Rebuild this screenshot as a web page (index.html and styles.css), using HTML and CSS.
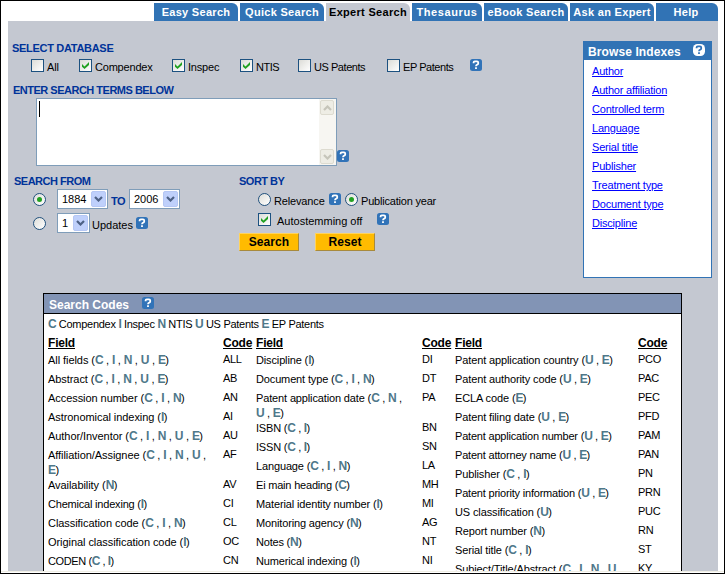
FILE: index.html
```html
<!DOCTYPE html>
<html lang="en">
<head>
<meta charset="utf-8">
<title>Expert Search</title>
<link rel="stylesheet" href="styles.css">
</head>
<body>
<svg class="defs" width="0" height="0">
  <symbol id="help" viewBox="0 0 12 12"><rect width="12" height="12" rx="2.5" fill="#3173b8"/><path d="M3.6 4.2V3.4Q3.6 2.4 4.8 2.4H7Q8.2 2.4 8.2 3.5V4.4Q8.2 5.2 7.2 5.6Q6 6 6 7.2M6 8.3V10" fill="none" stroke="#fff" stroke-width="1.8"/></symbol>
  <symbol id="help-light" viewBox="0 0 12 12"><rect width="12" height="12" rx="4.5" fill="#fff"/><path d="M3.6 4.2V3.4Q3.6 2.4 4.8 2.4H7Q8.2 2.4 8.2 3.5V4.4Q8.2 5.2 7.2 5.6Q6 6 6 7.2M6 8.3V10" fill="none" stroke="#3173b8" stroke-width="1.8"/></symbol>
  <symbol id="tick" viewBox="0 0 7 7"><path d="M0 2L2.5 4.5L7 0V3L2.5 7L0 4.7Z" fill="#21a121"/></symbol>
  <symbol id="chev" viewBox="0 0 9 6"><path d="M1 1L4.5 4.5L8 1" fill="none" stroke="currentColor" stroke-width="2.2"/></symbol>
  <symbol id="chev-up" viewBox="0 0 9 6"><path d="M1 5L4.5 1.5L8 5" fill="none" stroke="currentColor" stroke-width="2.2"/></symbol>
</svg>
<div class="window">
  <nav class="tabs">
    <a class="tab">Easy Search</a><a class="tab">Quick Search</a><a class="tab active">Expert Search</a><a class="tab thes">Thesaurus</a><a class="tab">eBook Search</a><a class="tab ask">Ask an Expert</a><a class="tab last">Help</a>
  </nav>
  <main class="page">
    <div class="top">
      <form class="form">
        <h2 class="label db">SELECT DATABASE</h2>
        <div class="databases">
          <label class="opt"><i class="box"></i>All</label>
          <label class="opt"><i class="box"><svg><use href="#tick"/></svg></i>Compendex</label>
          <label class="opt"><i class="box"><svg><use href="#tick"/></svg></i>Inspec</label>
          <label class="opt caps"><i class="box"><svg><use href="#tick"/></svg></i>NTIS</label>
          <label class="opt caps"><i class="box"></i>US Patents</label>
          <label class="opt caps"><i class="box"></i>EP Patents</label>
          <svg class="help"><use href="#help"/></svg>
        </div>
        <h2 class="label terms">ENTER SEARCH TERMS BELOW</h2>
        <div class="query">
          <div class="textarea"><i class="caret"></i>
            <div class="scroll"><b><svg><use href="#chev-up"/></svg></b><b><svg><use href="#chev"/></svg></b></div>
          </div>
          <svg class="help"><use href="#help"/></svg>
        </div>
        <div class="options">
          <section class="from">
            <h2 class="label">SEARCH FROM</h2>
            <div class="line">
              <i class="radio on"></i><span class="select year">1884<b><svg><use href="#chev"/></svg></b></span><span class="to">TO</span><span class="select year">2006<b><svg><use href="#chev"/></svg></b></span>
            </div>
            <div class="line">
              <i class="radio"></i><span class="select upd">1<b><svg><use href="#chev"/></svg></b></span><span class="updates">Updates</span><svg class="help"><use href="#help"/></svg>
            </div>
          </section>
          <section class="sort">
            <h2 class="label">SORT BY</h2>
            <div class="sortline">
              <i class="radio"></i><span class="rel">Relevance</span><svg class="help"><use href="#help"/></svg><i class="radio on pub"></i><span class="year-text">Publication year</span>
            </div>
            <div class="sortline stem">
              <i class="box"><svg><use href="#tick"/></svg></i><span class="auto">Autostemming off</span><svg class="help"><use href="#help"/></svg>
            </div>
            <div class="buttons"><span class="btn">Search</span><span class="btn">Reset</span></div>
          </section>
        </div>
      </form>
      <aside class="browse">
        <h2>Browse Indexes<svg class="help"><use href="#help-light"/></svg></h2>
        <ul>
          <li>Author</li>
          <li>Author affiliation</li>
          <li>Controlled term</li>
          <li>Language</li>
          <li>Serial title</li>
          <li>Publisher</li>
          <li>Treatment type</li>
          <li>Document type</li>
          <li>Discipline</li>
        </ul>
      </aside>
    </div>
    <section class="codes">
      <h2 class="codes-title">Search Codes<svg class="help"><use href="#help"/></svg></h2>
      <p class="legend"><b>C</b> Compendex <b>I</b> Inspec <b>N</b> NTIS <b>U</b> US Patents <b>E</b> EP Patents</p>
      <div class="groups">
        <div class="group g1">
          <div class="head"><u>Field</u><u>Code</u></div>
          <div class="row"><span>All fields (<b>C</b> , <b>I</b> , <b>N</b> , <b>U</b> , <b>E</b>)</span><em>ALL</em></div>
          <div class="row"><span>Abstract (<b>C</b> , <b>I</b> , <b>N</b> , <b>U</b> , <b>E</b>)</span><em>AB</em></div>
          <div class="row"><span>Accession number (<b>C</b> , <b>I</b> , <b>N</b>)</span><em>AN</em></div>
          <div class="row"><span>Astronomical indexing (<b>I</b>)</span><em>AI</em></div>
          <div class="row"><span>Author/Inventor (<b>C</b> , <b>I</b> , <b>N</b> , <b>U</b> , <b>E</b>)</span><em>AU</em></div>
          <div class="row"><span>Affiliation/Assignee (<b>C</b> , <b>I</b> , <b>N</b> , <b>U</b> ,<br><b>E</b>)</span><em>AF</em></div>
          <div class="row"><span>Availability (<b>N</b>)</span><em>AV</em></div>
          <div class="row tight"><span>Chemical indexing (<b>I</b>)</span><em>CI</em></div>
          <div class="row"><span>Classification code (<b>C</b> , <b>I</b> , <b>N</b>)</span><em>CL</em></div>
          <div class="row"><span>Original classification code (<b>I</b>)</span><em>OC</em></div>
          <div class="row caps"><span>CODEN (<b>C</b> , <b>I</b>)</span><em>CN</em></div>
        </div>
        <div class="group g2">
          <div class="head"><u>Field</u><u>Code</u></div>
          <div class="row"><span>Discipline (<b>I</b>)</span><em>DI</em></div>
          <div class="row"><span>Document type (<b>C</b> , <b>I</b> , <b>N</b>)</span><em>DT</em></div>
          <div class="row"><span>Patent application date (<b>C</b> , <b>N</b> ,<br><b>U</b> , <b>E</b>)</span><em>PA</em></div>
          <div class="row tight"><span>ISBN (<b>C</b> , <b>I</b>)</span><em>BN</em></div>
          <div class="row tight"><span>ISSN (<b>C</b> , <b>I</b>)</span><em>SN</em></div>
          <div class="row"><span>Language (<b>C</b> , <b>I</b> , <b>N</b>)</span><em>LA</em></div>
          <div class="row tight"><span>Ei main heading (<b>C</b>)</span><em>MH</em></div>
          <div class="row"><span>Material identity number (<b>I</b>)</span><em>MI</em></div>
          <div class="row"><span>Monitoring agency (<b>N</b>)</span><em>AG</em></div>
          <div class="row tight"><span>Notes (<b>N</b>)</span><em>NT</em></div>
          <div class="row"><span>Numerical indexing (<b>I</b>)</span><em>NI</em></div>
        </div>
        <div class="group g3">
          <div class="head"><u>Field</u><u>Code</u></div>
          <div class="row"><span>Patent application country (<b>U</b> , <b>E</b>)</span><em>PCO</em></div>
          <div class="row"><span>Patent authority code (<b>U</b> , <b>E</b>)</span><em>PAC</em></div>
          <div class="row"><span>ECLA code (<b>E</b>)</span><em>PEC</em></div>
          <div class="row"><span>Patent filing date (<b>U</b> , <b>E</b>)</span><em>PFD</em></div>
          <div class="row tight"><span>Patent application number (<b>U</b> , <b>E</b>)</span><em>PAM</em></div>
          <div class="row tight"><span>Patent attorney name (<b>U</b> , <b>E</b>)</span><em>PAN</em></div>
          <div class="row"><span>Publisher (<b>C</b> , <b>I</b>)</span><em>PN</em></div>
          <div class="row tight"><span>Patent priority information (<b>U</b> , <b>E</b>)</span><em>PRN</em></div>
          <div class="row"><span>US classification (<b>U</b>)</span><em>PUC</em></div>
          <div class="row"><span>Report number (<b>N</b>)</span><em>RN</em></div>
          <div class="row"><span>Serial title (<b>C</b> , <b>I</b>)</span><em>ST</em></div>
          <div class="row"><span>Subject/Title/Abstract (<b>C</b> , <b>I</b> , <b>N</b> , <b>U</b></span><em>KY</em></div>
        </div>
      </div>
    </section>
  </main>
</div>
</body>
</html>
```
FILE: styles.css
```css
* { box-sizing: border-box; }
body { margin: 0; background: #fff; font: 11px/15px "Liberation Sans", Arial, sans-serif; color: #000; }
.defs { display: block; position: absolute; }
.window { width: 725px; height: 574px; border: 1px solid #000; padding: 2px 6px 0 7px; overflow: hidden; display: flex; flex-direction: column; }
.window::after { content: ""; height: 1px; background: #f0eee4; margin: 0 -6px 0 -7px; flex: none; }
h2, p, ul { margin: 0; padding: 0; }
i, em { font-style: normal; }
.help { display: block; width: 12px; height: 12px; flex: none; }

.tabs { display: flex; gap: 2px; margin-left: 146px; height: 18px; flex: none; }
.tab { width: 84px; height: 18px; flex: none; background: #3173b5; color: #fff; font-weight: bold; line-height: 18px; text-align: center; border-top-right-radius: 6px; letter-spacing: .3px; white-space: nowrap; }
.tab.active { background: #c4c8d1; color: #000; }
.tab.thes { width: 70px; letter-spacing: .6px; }
.tab.last { width: 62px; padding-right: 2px; }

.page { background: #c4c8d1; width: 710px; height: 550px; overflow: hidden; flex: none; }
.top { display: flex; height: 272px; }
.form { width: 575px; flex: none; }
.label { font-size: 11px; line-height: 15px; font-weight: bold; color: #003399; white-space: nowrap; letter-spacing: -.5px; }
.db { margin: 20px 0 0 4px; letter-spacing: -.3px; }
.databases { display: grid; grid-template-columns: 48px 93px 68px 58px 89px 83px 12px; margin: 3px 0 0 23px; height: 13px; }
.opt { display: flex; gap: 3px; line-height: 16px; height: 13px; white-space: nowrap; letter-spacing: -.2px; }
.opt.caps { letter-spacing: -.45px; }
.box { width: 13px; height: 13px; flex: none; border: 1px solid #1c5180; background: linear-gradient(135deg, #dcdcd7, #fff); display: block; padding: 2px; }
.box svg { display: block; width: 7px; height: 7px; }
.terms { margin: 11px 0 0 5px; }
.query { display: flex; margin: 0 0 0 28px; align-items: flex-end; height: 68px; }
.query .help { margin-bottom: 4px; }
.textarea { width: 301px; height: 68px; border: 1px solid #7f9db9; background: #fff; display: flex; justify-content: space-between; }
.caret { width: 1px; height: 16px; background: #000; margin: 2px 0 0 2px; }
.scroll { width: 17px; background: #f7f6f2; display: flex; flex-direction: column; justify-content: space-between; padding: 1px; color: #c6c5ba; }
.scroll b { height: 15px; width: 14px; border: 1px solid #dddbd0; border-radius: 2px; background: #eeede5; display: flex; align-items: center; justify-content: center; }
.scroll svg { width: 9px; height: 6px; }

.options { display: flex; margin-top: 8px; }
.from { width: 225px; padding-left: 6px; flex: none; }
.sort { padding-left: 6px; }
.line { display: flex; height: 20px; margin-bottom: 4px; padding-left: 19px; }
.line .radio { margin: 4px 11px 0 0; }
.radio { width: 13px; height: 13px; flex: none; border: 1px solid #21517d; border-radius: 50%; background: linear-gradient(135deg, #deded9, #fff); display: flex; align-items: center; justify-content: center; }
.radio.on::after { content: ""; width: 5px; height: 5px; border-radius: 50%; background: #21a121; }
.select { display: flex; justify-content: space-between; height: 20px; border: 1px solid #7f9db9; background: #fff; padding: 1px 1px 1px 4px; font-size: 11px; line-height: 17px; }
.year { width: 51px; }
.upd { width: 33px; }
.select b { width: 15px; height: 16px; background: #bfd0fb; border: 1px solid #b5c7f4; border-radius: 2px; color: #4d6185; display: flex; align-items: center; justify-content: center; }
.select svg { width: 9px; height: 6px; }
.to { color: #039; font-weight: bold; width: 21px; padding-left: 3px; line-height: 24px; letter-spacing: -.4px; }
.updates { width: 46px; padding-left: 2px; line-height: 24px; }
.line .help { margin-top: 4px; }
.sortline { display: flex; padding-left: 19px; height: 13px; margin-top: 4px; line-height: 17px; white-space: nowrap; }
.rel { width: 58px; padding-left: 3px; letter-spacing: -.15px; }
.pub { margin: 0 3px 0 4px; }
.year-text { letter-spacing: -.2px; }
.stem { margin-top: 7px; }
.auto { width: 106px; padding-left: 6px; }
.buttons { display: flex; gap: 16px; margin-top: 7px; }
.btn { width: 60px; height: 18px; background: #fb0; font: bold 12px/16px "Liberation Sans", Arial, sans-serif; text-align: center; letter-spacing: .1px; border: 1px solid; border-color: #ffd35c #a88a3c #a88a3c #ffd35c; }

.browse { width: 129px; height: 237px; margin-top: 20px; flex: none; background: #fff; border: 1px solid #3173b5; }
.browse h2 { height: 18px; background: #3173b5; color: #fff; font-size: 12px; line-height: 20px; display: flex; justify-content: space-between; padding: 0 6px 0 4px; letter-spacing: .1px; }
.browse .help { margin-top: 2px; }
.browse ul { list-style: none; padding: 3px 0 0 8px; }
.browse li { height: 19px; line-height: 17px; color: #00f; text-decoration: underline; white-space: nowrap; letter-spacing: -.2px; }

.codes { width: 639px; height: 290px; margin-left: 35px; border: 1px solid #000; background: #fff; }
.codes-title { height: 20px; background: #8294b5; border-bottom: 1px solid #000; color: #fff; font-size: 12px; line-height: 22px; display: flex; gap: 13px; padding-left: 5px; }
.codes-title .help { margin-top: 3px; }
.codes b { color: #4f788a; font-size: 12px; line-height: 1; letter-spacing: -.6px; }
.legend { height: 20px; line-height: 20px; padding-left: 4px; letter-spacing: -.28px; }
.groups { display: flex; padding-left: 4px; }
.group { flex: none; }
.g1 { width: 208px; letter-spacing: -.06px; }
.g2 { width: 199px; letter-spacing: -.14px; }
.g3 { width: 220px; letter-spacing: -.12px; }
.head, .row { display: grid; white-space: nowrap; }
.tight { letter-spacing: -.2px; }
.row.caps { letter-spacing: -.4px; }
.g1 > div { grid-template-columns: 175px auto; }
.g2 > div { grid-template-columns: 166px auto; }
.g3 > div { grid-template-columns: 183px auto; }
.head { height: 19px; font-weight: bold; font-size: 12px; line-height: 19px; letter-spacing: -.2px; }
.row { min-height: 19px; line-height: 15px; align-items: start; }
.row em { margin-top: -1px; height: 15px; letter-spacing: -.3px; }
```
